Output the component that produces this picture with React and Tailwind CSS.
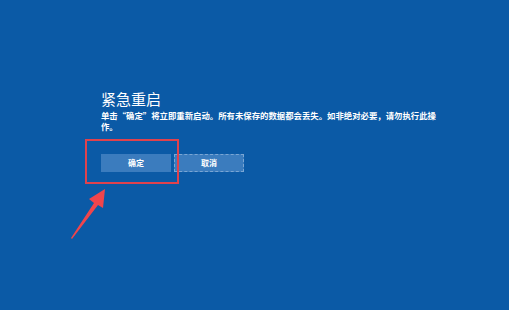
export default function App() {
  const font = { fontFamily: '"Microsoft YaHei", "Noto Sans CJK SC", sans-serif' };

  return (
    <div
      className="relative h-[310px] w-[509px] overflow-hidden bg-[#0b5aa6] text-white"
      style={font}
    >
      <div className="flex flex-col pl-[101px] pt-[90px]">
        <h1 className="text-[15px] leading-[18px] font-normal">紧急重启</h1>
        <p className="mt-[2px] w-[346px] text-[8.4px] leading-[11px] font-bold">
          单击“确定”将立即重新启动。所有未保存的数据都会丢失。如非绝对必要，请勿执行此操作。
        </p>
        <div className="mt-[22px] flex gap-[3px]">
          <button className="flex h-[18px] w-[70px] items-center justify-center bg-[#3b7cbe] text-[8px] font-bold">
            确定
          </button>
          <button className="flex h-[18px] w-[70px] items-center justify-center border border-dashed border-[#7aa6d4] bg-[#3b7cbe] text-[8px] font-bold">
            取消
          </button>
        </div>
      </div>

      {/* annotation: red frame + arrow */}
      <div className="absolute left-[85px] top-[139px] h-[45px] w-[94px] border-2 border-[#e0424d]" />
      <svg className="absolute left-0 top-0" width="509" height="310" viewBox="0 0 509 310">
        <path d="M71 238 L94 203 L89 199 L105 189 L103 208 L98 205 L72 239 Z" fill="#f0454c" />
      </svg>
    </div>
  );
}
